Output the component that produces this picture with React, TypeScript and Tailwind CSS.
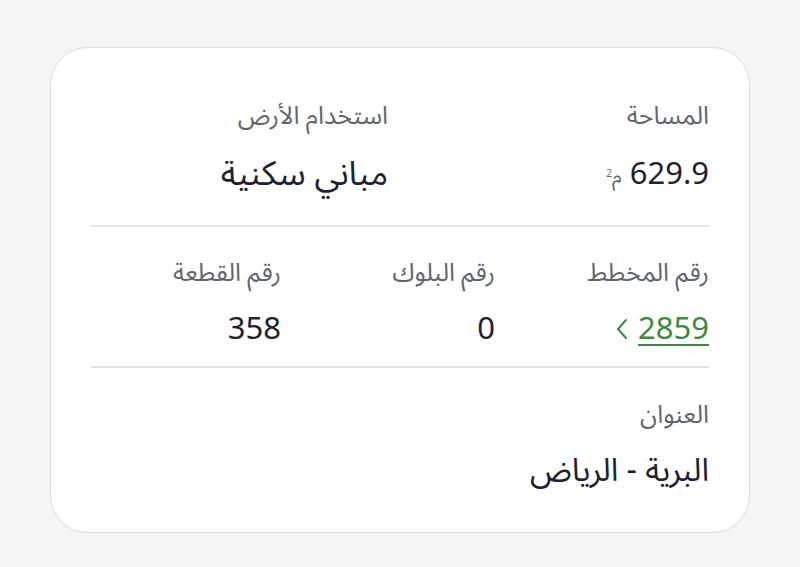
const font = { fontFamily: '"Noto Sans Arabic", "Noto Sans", "DejaVu Sans", sans-serif' };

function Field({
  label,
  gap = "mt-[20px]",
  children,
}: {
  label: string;
  gap?: string;
  children: React.ReactNode;
}) {
  return (
    <div className="flex flex-col">
      <span className="text-[25px] leading-[32px] text-[#5f6670]">{label}</span>
      <div className={`${gap} h-[44px] leading-[44px] flex items-center text-[31px] text-[#1e2232]`}>{children}</div>
    </div>
  );
}

function Chevron() {
  return (
    <svg className="mr-2" width="16" height="24" viewBox="0 0 16 24" fill="none" stroke="#3d8b40" strokeWidth="2" strokeLinecap="round" strokeLinejoin="round">
      <polyline points="12 3 4 12 12 21" />
    </svg>
  );
}

export default function App() {
  return (
    <div dir="rtl" style={font} className="min-h-[567px] w-full bg-[#f4f5f6] flex justify-center pt-[47px]">
      <div className="w-[700px] h-[486px] bg-white border-[1.5px] border-[#dcdcdc] rounded-[38px] px-[40px] pt-[52px]">
        <div className="grid grid-cols-2 gap-6">
          <Field label="المساحة">
            <span className="leading-[44px]">629.9</span>
            <span className="mr-2 text-[20px] leading-[44px] text-[#5f6670] relative top-[3px]">
              م<sup className="text-[10px] relative -top-[6px]">2</sup>
            </span>
          </Field>
          <Field label="استخدام الأرض">
            <span className="text-[34px] leading-[44px]">مباني سكنية</span>
          </Field>
        </div>

        <hr className="mt-[29px] border-t-2 border-[#e3e3e3]" />

        <div className="grid grid-cols-3 gap-6 pt-[30px]">
          <Field label="رقم المخطط" gap="mt-[18px]">
            <a href="#" className="leading-[44px] text-[#3d8b40] underline decoration-[1.5px] underline-offset-[5px]">
              2859
            </a>
            <Chevron />
          </Field>
          <Field label="رقم البلوك" gap="mt-[18px]">
            <span className="leading-[44px]">0</span>
          </Field>
          <Field label="رقم القطعة" gap="mt-[18px]">
            <span className="leading-[44px]">358</span>
          </Field>
        </div>

        <hr className="mt-[15px] border-t-2 border-[#e3e3e3]" />

        <div className="pt-[31px]">
          <Field label="العنوان" gap="mt-[18px]">
            <span className="text-[32px] leading-[44px]">البرية - الرياض</span>
          </Field>
        </div>
      </div>
    </div>
  );
}
